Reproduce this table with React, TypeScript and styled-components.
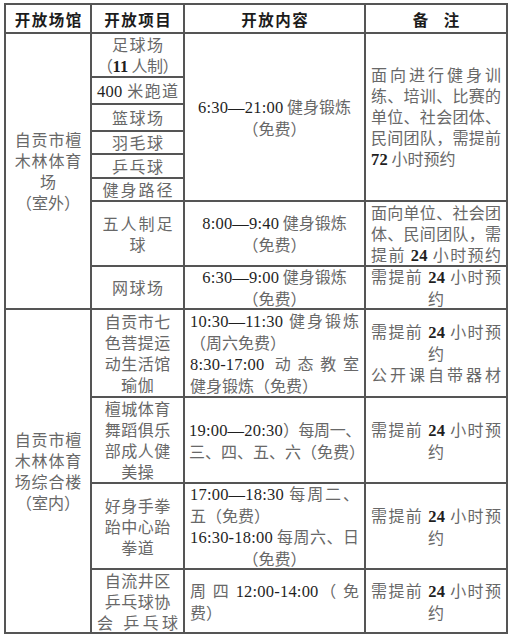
import React from "react";
import styled, { createGlobalStyle } from "styled-components";

const Global = createGlobalStyle`
  html, body { margin: 0; padding: 0; background: #ffffff; }
  body { font-family: "Liberation Serif", "Noto Sans CJK SC", serif; }
`;

const Page = styled.div`
  padding: 3px 8px 6px 4px;
  background: #fff;
`;

const Grid = styled.div`
  display: grid;
  width: 504px;
  box-sizing: border-box;
  grid-template-columns: 84px 91px 179px 140px;
  grid-template-rows: 27px 42px 25px 25px 21px 22px 21px 63px 41px 86px 84px 84px 62px;
  gap: 2px;
  padding: 2px;
  background: #555;
`;

const Cell = styled.div<{ $col: number; $span?: number; $pad?: number }>`
  grid-column: ${(p) => p.$col};
  grid-row: span ${(p) => p.$span ?? 1};
  background: #fff;
  display: flex;
  flex-direction: column;
  justify-content: center;
  padding: 0 ${(p) => p.$pad ?? 5}px;
  min-width: 0;
  color: #686868;
  font-family: "Noto Sans CJK SC", "Liberation Serif", sans-serif;
  font-size: 16px;
  line-height: 21px;
`;

const HeadCell = styled(Cell)`
  color: #1c1c1c;
  font-weight: 700;
  font-size: 15.5px;
  line-height: 20px;
`;

const Line = styled.div<{ $align?: "left" | "center"; $ls?: number }>`
  white-space: nowrap;
  text-align: ${(p) => p.$align ?? "center"};
  letter-spacing: ${(p) => p.$ls ?? 0}px;
  ${(p) => (p.$ls && p.$ls > 0 && (p.$align ?? "center") === "center" ? `text-indent: ${p.$ls}px;` : "")}
`;

const JLine = styled.div`
  white-space: normal;
  text-align: justify;
  text-align-last: justify;
  text-justify: inter-character;
`;

const Num = styled.span<{ $bold?: boolean }>`
  font-family: "Liberation Serif", serif;
  font-size: 16.5px;
  letter-spacing: 0.2px;
  color: #1f1f1f;
  font-weight: ${(p) => (p.$bold ? 700 : 400)};
`;

const Need24 = () => (
  <>
    <JLine>
      需提前 <Num $bold>24</Num> 小时预
    </JLine>
    <Line>约</Line>
  </>
);

export default function App() {
  return (
    <>
      <Global />
      <Page>
        <Grid>
          <HeadCell $col={1}>
            <Line $ls={1.5}>开放场馆</Line>
          </HeadCell>
          <HeadCell $col={2}>
            <Line $ls={1.5}>开放项目</Line>
          </HeadCell>
          <HeadCell $col={3}>
            <Line $ls={1.5}>开放内容</Line>
          </HeadCell>
          <HeadCell $col={4}>
            <Line>备　注</Line>
          </HeadCell>

          {/* Outdoor venue */}
          <Cell $col={1} $span={8} $pad={3}>
            <Line $ls={0.8}>自贡市檀</Line>
            <Line $ls={0.8}>木林体育</Line>
            <Line>场</Line>
            <Line>（室外）</Line>
          </Cell>
          <Cell $col={2} $pad={3}>
            <Line $ls={1.5}>足球场</Line>
            <Line $ls={-0.5}>
              （<Num $bold>11</Num> 人制）
            </Line>
          </Cell>
          <Cell $col={3} $span={6}>
            <Line>
              <Num>6:30—21:00</Num> 健身锻炼
            </Line>
            <Line>（免费）</Line>
          </Cell>
          <Cell $col={4} $span={6}>
            <JLine>面向进行健身训</JLine>
            <JLine>练、培训、比赛的</JLine>
            <JLine>单位、社会团体、</JLine>
            <JLine>民间团队，需提前</JLine>
            <Line $align="left">
              <Num $bold>72</Num> 小时预约
            </Line>
          </Cell>
          <Cell $col={2} $pad={5}>
            <JLine>
              <Num>400</Num> 米跑道
            </JLine>
          </Cell>
          <Cell $col={2}>
            <Line $ls={1.5}>篮球场</Line>
          </Cell>
          <Cell $col={2}>
            <Line $ls={1.5}>羽毛球</Line>
          </Cell>
          <Cell $col={2}>
            <Line $ls={1.5}>乒乓球</Line>
          </Cell>
          <Cell $col={2}>
            <Line $ls={2}>健身路径</Line>
          </Cell>

          <Cell $col={2}>
            <Line $ls={2}>五人制足</Line>
            <Line>球</Line>
          </Cell>
          <Cell $col={3}>
            <Line>
              <Num>8:00—9:40</Num> 健身锻炼
            </Line>
            <Line>（免费）</Line>
          </Cell>
          <Cell $col={4}>
            <JLine>面向单位、社会团</JLine>
            <JLine>体、民间团队，需</JLine>
            <JLine>
              提前 <Num $bold>24</Num> 小时预约
            </JLine>
          </Cell>

          <Cell $col={2}>
            <Line $ls={1.5}>网球场</Line>
          </Cell>
          <Cell $col={3}>
            <Line>
              <Num>6:30—9:00</Num> 健身锻炼
            </Line>
            <Line>（免费）</Line>
          </Cell>
          <Cell $col={4}>
            <Need24 />
          </Cell>

          {/* Indoor venue */}
          <Cell $col={1} $span={4} $pad={3}>
            <Line $ls={0.8}>自贡市檀</Line>
            <Line $ls={0.8}>木林体育</Line>
            <Line $ls={0.8}>场综合楼</Line>
            <Line>（室内）</Line>
          </Cell>
          <Cell $col={2}>
            <Line $ls={0.5}>自贡市七</Line>
            <Line $ls={0.5}>色菩提运</Line>
            <Line $ls={0.5}>动生活馆</Line>
            <Line $ls={0.5}>瑜伽</Line>
          </Cell>
          <Cell $col={3}>
            <JLine>
              <Num>10:30—11:30</Num> 健身锻炼
            </JLine>
            <Line $align="left">（周六免费）</Line>
            <JLine>
              <Num>8:30-17:00</Num> 动态教室
            </JLine>
            <Line $align="left">健身锻炼（免费）</Line>
          </Cell>
          <Cell $col={4}>
            <Need24 />
            <JLine>公开课自带器材</JLine>
          </Cell>

          <Cell $col={2}>
            <Line $ls={0.5}>檀城体育</Line>
            <Line $ls={0.5}>舞蹈俱乐</Line>
            <Line $ls={0.5}>部成人健</Line>
            <Line $ls={0.5}>美操</Line>
          </Cell>
          <Cell $col={3} $pad={4}>
            <Line $align="left" $ls={-0.4}>
              <Num>19:00—20:30</Num>）每周一、
            </Line>
            <JLine>三、四、五、六（免费）</JLine>
          </Cell>
          <Cell $col={4}>
            <Need24 />
          </Cell>

          <Cell $col={2}>
            <Line $ls={0.5}>好身手拳</Line>
            <Line $ls={0.5}>跆中心跆</Line>
            <Line $ls={0.5}>拳道</Line>
          </Cell>
          <Cell $col={3}>
            <JLine>
              <Num>17:00—18:30</Num> 每周二、
            </JLine>
            <Line $align="left">五（免费）</Line>
            <JLine>
              <Num>16:30-18:00</Num> 每周六、日
            </JLine>
            <Line>（免费）</Line>
          </Cell>
          <Cell $col={4}>
            <Need24 />
          </Cell>

          <Cell $col={2}>
            <Line $ls={0.5}>自流井区</Line>
            <Line $ls={0.5}>乒乓球协</Line>
            <JLine>会 乒乓球</JLine>
          </Cell>
          <Cell $col={3}>
            <JLine>
              周 四 <Num>12:00-14:00</Num>（ 免
            </JLine>
            <Line $align="left">费）</Line>
          </Cell>
          <Cell $col={4}>
            <Need24 />
          </Cell>
        </Grid>
      </Page>
    </>
  );
}
